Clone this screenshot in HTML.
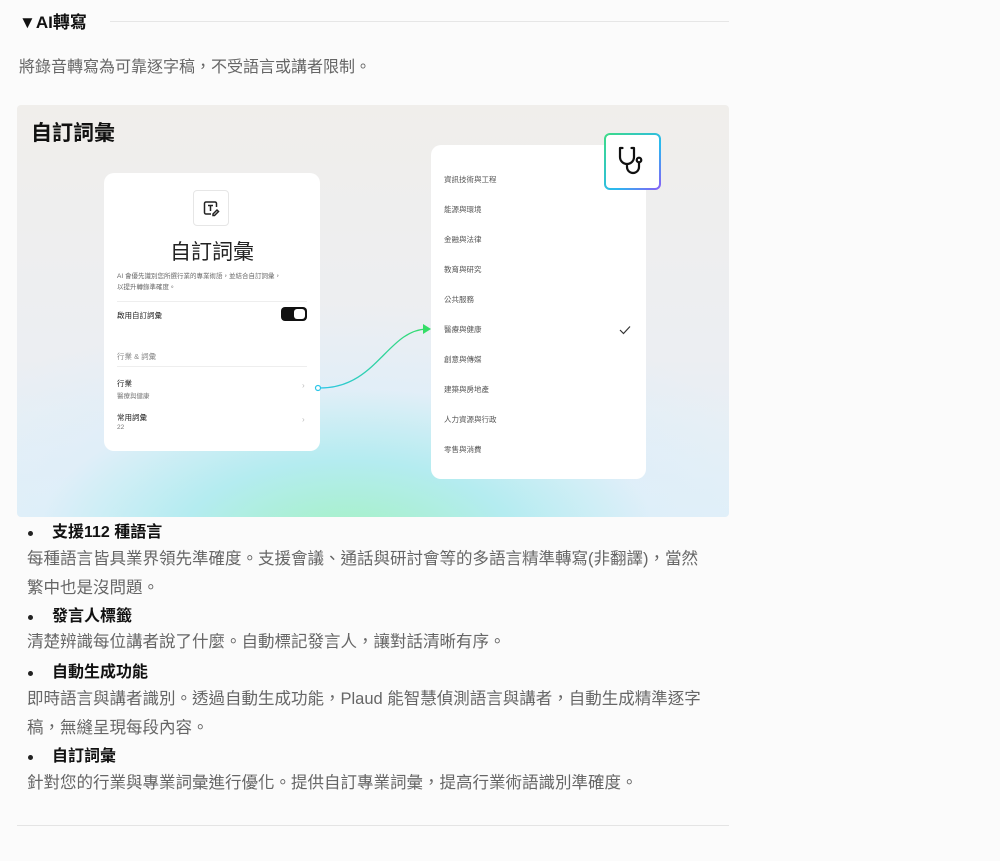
<!DOCTYPE html>
<html><head><meta charset="utf-8"><style>
*{margin:0;padding:0;box-sizing:border-box}
body{width:1000px;height:861px;background:#fbfbfb;font-family:"Liberation Sans","Noto Sans CJK TC",sans-serif;color:#222;position:relative;overflow:hidden}
.abs{position:absolute}
.h{left:19px;top:8px;font-size:17px;font-weight:bold;color:#111}
.hline{left:110px;top:21px;width:619px;height:1px;background:#e6e6e6}
.sub{left:19px;top:53px;font-size:16px;color:#666}
.img{left:17px;top:105px;width:712px;height:412px;border-radius:4px;overflow:hidden;
background:radial-gradient(ellipse 480px 240px at 330px 440px,#a4f2c0 0%,#b4ecf0 35%,rgba(220,238,250,.6) 65%,rgba(240,238,235,0) 100%),linear-gradient(#f0eeeb,#eceef2 60%,#e2f0f8)}
.card{background:#fff;border-radius:10px}
.t{font-size:7.5px;color:#555}
.li{left:27px;font-size:16px;font-weight:bold;color:#111;line-height:22px}
.li:before{content:"";position:absolute;left:1px;top:9px;width:5px;height:5px;border-radius:50%;background:#222}
.li span{margin-left:25px}
.p{left:27px;font-size:16.5px;color:#666;line-height:29px;width:720px;white-space:nowrap}
</style></head><body>
<div class="abs h">▼AI轉寫</div>
<div class="abs hline"></div>
<div class="abs sub">將錄音轉寫為可靠逐字稿，不受語言或講者限制。</div>
<div class="abs img">
 <div class="abs" style="left:14px;top:12px;font-size:21px;font-weight:bold;color:#111">自訂詞彙</div>
 <div class="abs card" style="left:87px;top:68px;width:216px;height:278px">
  <div class="abs" style="left:89px;top:17px;width:36px;height:36px;border:1px solid #e6e6e6;border-radius:4px"></div>
  <svg class="abs" style="left:98px;top:26px" width="18" height="18" viewBox="0 0 18 18" fill="none" stroke="#222" stroke-width="1.5"><path d="M9 15H4a1.5 1.5 0 0 1-1.5-1.5v-9A1.5 1.5 0 0 1 4 3h9a1.5 1.5 0 0 1 1.5 1.5V8M6 6.5h5M8.5 6.5v5.5M11 15l4-4 1.5 1.5-4 4H11z"/></svg>
  <div class="abs" style="left:0;width:216px;top:63px;text-align:center;font-size:21px;color:#222">自訂詞彙</div>
  <div class="abs" style="left:13px;top:98px;font-size:6.5px;color:#666;line-height:11px">AI 會優先識別您所選行業的專業術語，並結合自訂詞彙，<br>以提升轉錄準確度。</div>
  <div class="abs" style="left:13px;top:128px;width:190px;height:1px;background:#eee"></div>
  <div class="abs" style="left:13px;top:137px;font-size:7.5px;color:#222">啟用自訂詞彙</div>
  <div class="abs" style="left:177px;top:134px;width:26px;height:14px;border-radius:4px;background:#111"><div class="abs" style="left:13px;top:2px;width:11px;height:10px;border-radius:3px;background:#fff"></div></div>
  <div class="abs" style="left:13px;top:178px;font-size:7.5px;color:#888">行業 &amp; 詞彙</div>
  <div class="abs" style="left:13px;top:193px;width:190px;height:1px;background:#eee"></div>
  <div class="abs" style="left:13px;top:205px;font-size:7.5px;color:#222">行業</div>
  <div class="abs" style="left:13px;top:217px;font-size:6.5px;color:#777">醫療與健康</div>
  <div class="abs" style="left:198px;top:208px;font-size:8px;color:#bbb">›</div>
  <div class="abs" style="left:13px;top:239px;font-size:7.5px;color:#222">常用詞彙</div>
  <div class="abs" style="left:13px;top:251px;font-size:6.5px;color:#777">22</div>
  <div class="abs" style="left:198px;top:242px;font-size:8px;color:#bbb">›</div>
 </div>
 <svg class="abs" style="left:0;top:0" width="712" height="412"><defs><linearGradient id="g" x1="0" x2="1"><stop offset="0" stop-color="#2cc6e8"/><stop offset="1" stop-color="#33dd66"/></linearGradient></defs>
  <path d="M303 283C360 283 370 225 410 224" stroke="url(#g)" stroke-width="1.3" fill="none"/>
  <circle cx="301" cy="283" r="2.5" fill="#fff" stroke="#2cc6e8" stroke-width="1.2"/>
  <path d="M406 219L414 224L406 229Z" fill="#33dd66"/></svg>
 <div class="abs card" style="left:414px;top:40px;width:215px;height:334px">
  <div class="abs t" style="left:13px;top:29px">資訊技術與工程</div>
  <div class="abs t" style="left:13px;top:59px">能源與環境</div>
  <div class="abs t" style="left:13px;top:89px">金融與法律</div>
  <div class="abs t" style="left:13px;top:119px">教育與研究</div>
  <div class="abs t" style="left:13px;top:149px">公共服務</div>
  <div class="abs t" style="left:13px;top:179px">醫療與健康</div>
  <svg class="abs" style="left:188px;top:180px" width="12" height="10" viewBox="0 0 12 10" fill="none" stroke="#333" stroke-width="1.2"><path d="M1 5l3.5 3.5L11 1.5"/></svg>
  <div class="abs t" style="left:13px;top:209px">創意與傳媒</div>
  <div class="abs t" style="left:13px;top:239px">建築與房地產</div>
  <div class="abs t" style="left:13px;top:269px">人力資源與行政</div>
  <div class="abs t" style="left:13px;top:299px">零售與消費</div>
 </div>
 <div class="abs" style="left:587px;top:28px;width:57px;height:57px;border-radius:6px;background:linear-gradient(135deg,#3ddc84,#2bb8f0 60%,#8b5cf6);padding:2px"><div style="width:100%;height:100%;background:#fff;border-radius:4px"></div></div>
 <svg class="abs" style="left:598px;top:40px" width="36" height="34" viewBox="0 0 36 34" fill="none" stroke="#111" stroke-width="2.2" stroke-linecap="round"><path d="M5 3v9a7 7 0 0 0 14 0V3M5 3h2.5M16.5 3H19M12 19v3a6 6 0 0 0 12 0v-4"/><circle cx="24" cy="15" r="2.3"/></svg>
</div>
<div class="abs li" style="top:522px"><span>支援112 種語言</span></div>
<div class="abs p" style="top:545px">每種語言皆具業界領先準確度。支援會議、通話與研討會等的多語言精準轉寫(非翻譯)，當然<br>繁中也是沒問題。</div>
<div class="abs li" style="top:606px"><span>發言人標籤</span></div>
<div class="abs p" style="top:628px">清楚辨識每位講者說了什麼。自動標記發言人，讓對話清晰有序。</div>
<div class="abs li" style="top:662px"><span>自動生成功能</span></div>
<div class="abs p" style="top:685px">即時語言與講者識別。透過自動生成功能，Plaud 能智慧偵測語言與講者，自動生成精準逐字<br>稿，無縫呈現每段內容。</div>
<div class="abs li" style="top:746px"><span>自訂詞彙</span></div>
<div class="abs p" style="top:769px">針對您的行業與專業詞彙進行優化。提供自訂專業詞彙，提高行業術語識別準確度。</div>
<div class="abs" style="left:17px;top:825px;width:712px;height:1px;background:#e4e4e4"></div>
</body></html>
